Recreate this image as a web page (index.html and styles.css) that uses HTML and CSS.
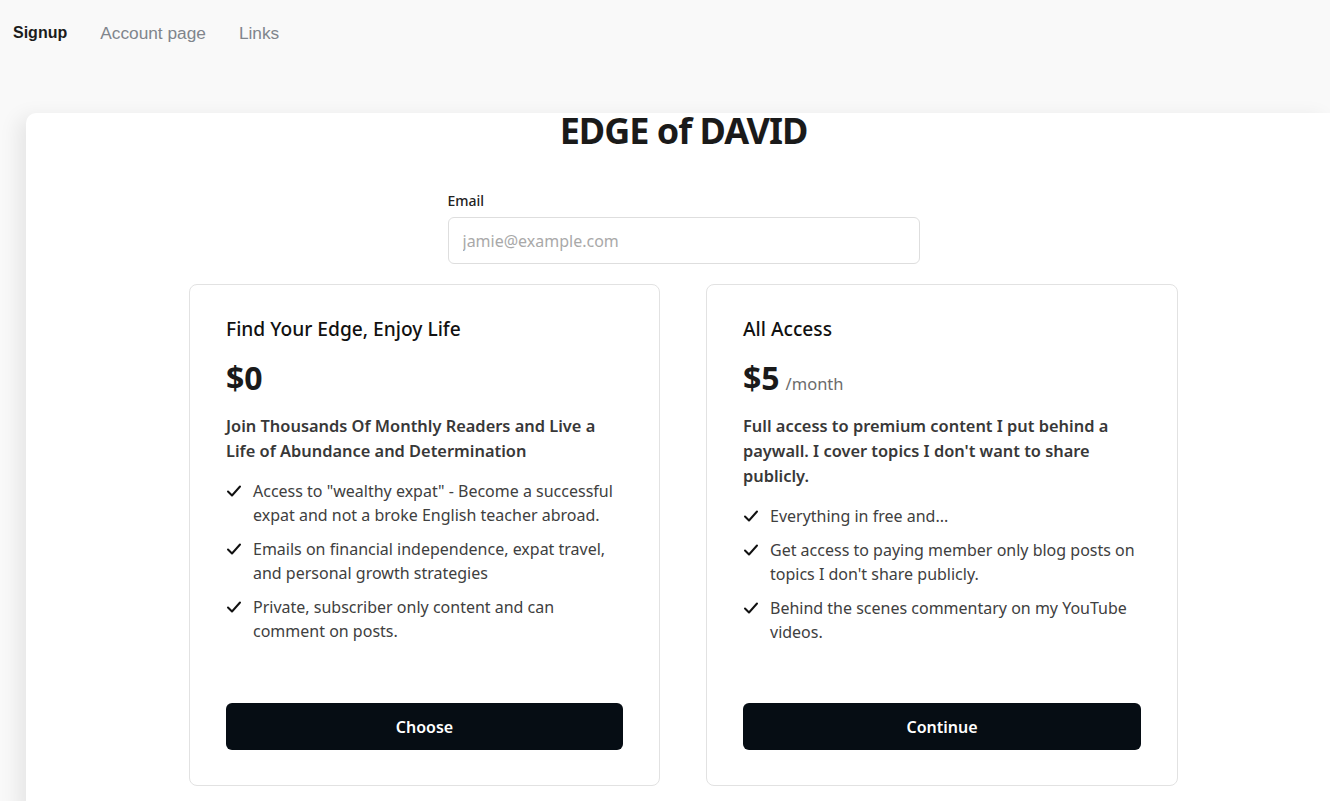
FILE: index.html
```html
<!DOCTYPE html>
<html lang="en">
<head>
<meta charset="utf-8">
<title>EDGE of DAVID</title>
<link rel="stylesheet" href="styles.css">
</head>
<body>
<nav class="topnav">
  <a class="nav-link active" href="#">Signup</a>
  <a class="nav-link" href="#">Account page</a>
  <a class="nav-link" href="#">Links</a>
</nav>
<main class="panel">
  <div class="content">
    <h1 class="site-title">EDGE of DAVID</h1>
    <div class="field">
      <label class="field-label" for="email">Email</label>
      <input class="field-input" id="email" type="email" placeholder="jamie@example.com">
    </div>
    <div class="plans">
      <section class="plan">
        <h2 class="plan-name">Find Your Edge, Enjoy Life</h2>
        <div class="plan-price"><span class="amount">$0</span></div>
        <p class="plan-desc">Join Thousands Of Monthly Readers and Live a Life of Abundance and Determination</p>
        <ul class="features">
          <li class="feature"><svg class="check" viewBox="0 0 16 16"><path d="M2 8.5 L6 12.5 L14 3.5"/></svg><span>Access to "wealthy expat" - Become a successful expat and not a broke English teacher abroad.</span></li>
          <li class="feature"><svg class="check" viewBox="0 0 16 16"><path d="M2 8.5 L6 12.5 L14 3.5"/></svg><span>Emails on financial independence, expat travel, and personal growth strategies</span></li>
          <li class="feature"><svg class="check" viewBox="0 0 16 16"><path d="M2 8.5 L6 12.5 L14 3.5"/></svg><span>Private, subscriber only content and can comment on posts.</span></li>
        </ul>
        <button class="plan-btn" type="button">Choose</button>
      </section>
      <section class="plan">
        <h2 class="plan-name">All Access</h2>
        <div class="plan-price"><span class="amount">$5</span><span class="period">/month</span></div>
        <p class="plan-desc">Full access to premium content I put behind a paywall. I cover topics I don't want to share publicly.</p>
        <ul class="features">
          <li class="feature"><svg class="check" viewBox="0 0 16 16"><path d="M2 8.5 L6 12.5 L14 3.5"/></svg><span>Everything in free and...</span></li>
          <li class="feature"><svg class="check" viewBox="0 0 16 16"><path d="M2 8.5 L6 12.5 L14 3.5"/></svg><span>Get access to paying member only blog posts on topics I don't share publicly.</span></li>
          <li class="feature"><svg class="check" viewBox="0 0 16 16"><path d="M2 8.5 L6 12.5 L14 3.5"/></svg><span>Behind the scenes commentary on my YouTube videos.</span></li>
        </ul>
        <button class="plan-btn" type="button">Continue</button>
      </section>
    </div>
  </div>
</main>
</body>
</html>
```
FILE: styles.css
```css
* { box-sizing: border-box; }

html, body {
  margin: 0;
  padding: 0;
  height: 100%;
  overflow: hidden;
}

body {
  background: #f9f9f9;
  font-family: "Noto Sans", "Open Sans", sans-serif;
  color: #1a1a1a;
}

.topnav {
  display: flex;
  align-items: center;
  gap: 33px;
  height: 66px;
  padding-left: 13px;
  font-family: "Liberation Sans", Arial, sans-serif;
  font-size: 16px;
}

.nav-link {
  text-decoration: none;
  color: #80858c;
  font-size: 17.3px;
}

.nav-link.active {
  color: #1c1c1c;
  font-weight: bold;
  font-size: 16px;
}

.panel {
  margin: 47px 0 0 26px;
  background: #fff;
  border-top-left-radius: 10px;
  box-shadow: -8px 4px 20px rgba(0, 0, 0, 0.08);
  min-height: 700px;
  padding-left: 11px;
}

.content {
  display: flex;
  flex-direction: column;
  align-items: center;
}

.site-title {
  margin: -4px 0 0;
  font-size: 36px;
  line-height: 44px;
  font-weight: 700;
  color: #1a1a1a;
  letter-spacing: -1px;
}

.field {
  width: 472px;
  margin-top: 38px;
  display: flex;
  flex-direction: column;
}

.field-label {
  font-size: 14px;
  font-weight: 500;
  line-height: 20px;
  color: #222;
  margin-bottom: 6px;
}

.field-input {
  height: 47px;
  border: 1px solid #dedede;
  border-radius: 6px;
  padding: 0 14px;
  font-family: inherit;
  font-size: 16px;
  color: #222;
  outline: none;
}

.field-input::placeholder {
  color: #a9a9a9;
}

.plans {
  display: grid;
  grid-template-columns: 471px 472px;
  gap: 46px;
  margin-top: 20px;
}

.plan {
  display: flex;
  flex-direction: column;
  min-height: 502px;
  border: 1px solid #e2e2e2;
  border-radius: 8px;
  padding: 32px 36px 35px;
}

.plan-name {
  margin: 0;
  font-size: 19.2px;
  line-height: 24px;
  font-weight: 500;
  color: #111;
}

.plan-price {
  display: flex;
  align-items: baseline;
  gap: 6px;
  margin-top: 17px;
  height: 40px;
}

.amount {
  font-size: 32px;
  line-height: 40px;
  font-weight: 700;
  color: #1a1a1a;
}

.period {
  font-size: 16.5px;
  color: #6b6b6b;
}

.plan-desc {
  margin: 15px 0 0;
  font-size: 16.4px;
  line-height: 25px;
  font-weight: 600;
  color: #383838;
}

.features {
  list-style: none;
  margin: 16px 0 0;
  padding: 0;
  display: flex;
  flex-direction: column;
  gap: 10px;
}

.feature {
  display: flex;
  align-items: flex-start;
  gap: 11px;
  font-size: 16px;
  line-height: 24px;
  color: #404040;
}

.check {
  flex: none;
  width: 16px;
  height: 16px;
  margin-top: 4px;
  fill: none;
  stroke: #111;
  stroke-width: 2;
  stroke-linecap: round;
  stroke-linejoin: round;
}

.plan-btn {
  margin-top: auto;
  height: 47px;
  width: 100%;
  border: none;
  border-radius: 6px;
  background: #060d14;
  color: #fff;
  font-family: inherit;
  font-size: 16px;
  font-weight: 600;
  cursor: pointer;
}
```
